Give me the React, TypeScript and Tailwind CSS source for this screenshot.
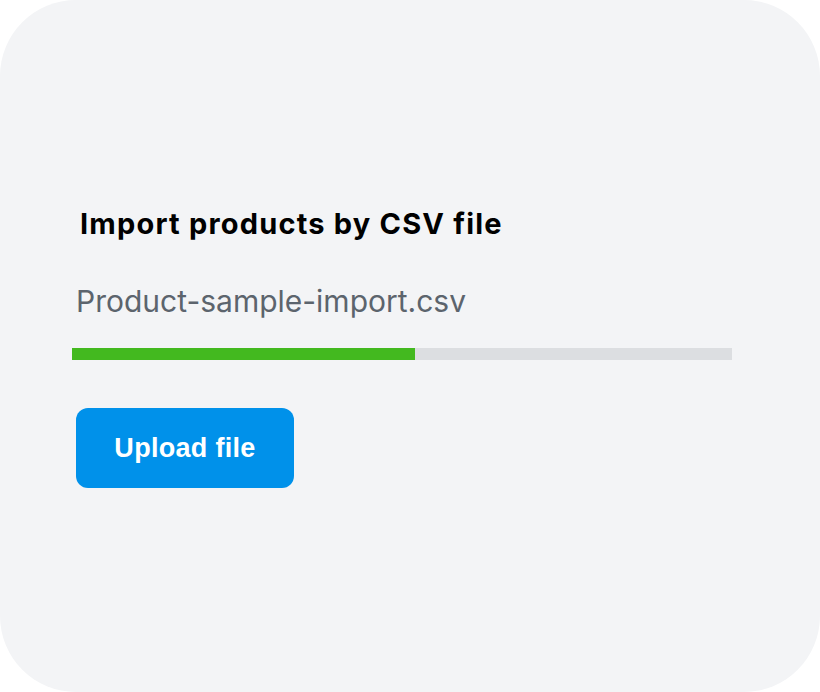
export default function App() {
  const progress = 52;

  return (
    <div className="w-[820px] h-[692px] bg-white">
      <div
        className="w-full h-full rounded-[76px] bg-[#f3f4f6] pl-[72px] pr-[88px] pt-[204px]"
        style={{ fontFamily: "Inter, 'Noto Sans', sans-serif" }}
      >
        {/* Titulo */}
        <h1 className="pl-2 text-[29px] leading-[40px] font-bold text-black tracking-[1.2px]">
          Import products by CSV file
        </h1>

        {/* Arquivo */}
        <p className="mt-[39px] pl-[4px] text-[30px] leading-[36px] text-[#5c646d]">
          Product-sample-import.csv
        </p>

        {/* Barra de progresso */}
        <div className="mt-[29px] h-3 w-full bg-[#dcdee1]">
          <div className="h-full bg-[#43b91f]" style={{ width: `${progress}%` }} />
        </div>

        <button
          className="mt-[48px] ml-1 w-[218px] h-[80px] rounded-xl bg-[#0091ea] text-white text-[27px] font-bold tracking-[0.3px]"
          style={{ fontFamily: "'Liberation Sans', Arial, sans-serif" }}
        >
          Upload file
        </button>
      </div>
    </div>
  );
}
